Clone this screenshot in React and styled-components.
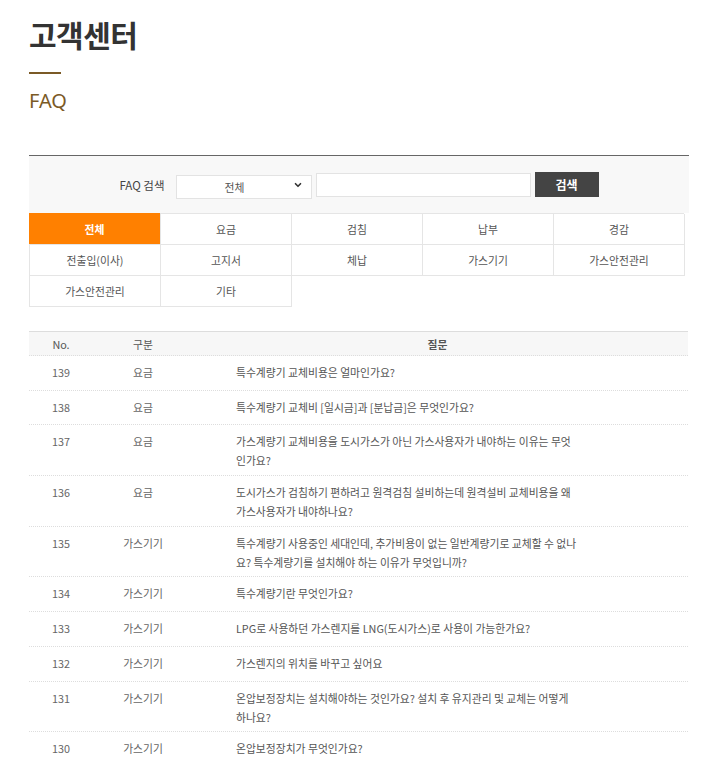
import React from "react";
import styled, { createGlobalStyle } from "styled-components";
import { ChevronDown } from "lucide-react";

const tabs = [
    "전체", "요금", "검침", "납부", "경감",
    "전출입(이사)", "고지서", "체납", "가스기기", "가스안전관리",
    "가스안전관리", "기타",
];

const faqs = [
    { no: 139, type: "요금", q: "특수계량기 교체비용은 얼마인가요?" },
    { no: 138, type: "요금", q: "특수계량기 교체비 [일시금]과 [분납금]은 무엇인가요?" },
    { no: 137, type: "요금", q: "가스계량기 교체비용을 도시가스가 아닌 가스사용자가 내야하는 이유는 무엇인가요?" },
    { no: 136, type: "요금", q: "도시가스가 검침하기 편하려고 원격검침 설비하는데 원격설비 교체비용을 왜 가스사용자가 내야하나요?" },
    { no: 135, type: "가스기기", q: "특수계량기 사용중인 세대인데, 추가비용이 없는 일반계량기로 교체할 수 없나요? 특수계량기를 설치해야 하는 이유가 무엇입니까?" },
    { no: 134, type: "가스기기", q: "특수계량기란 무엇인가요?" },
    { no: 133, type: "가스기기", q: "LPG로 사용하던 가스렌지를 LNG(도시가스)로 사용이 가능한가요?" },
    { no: 132, type: "가스기기", q: "가스렌지의 위치를 바꾸고 싶어요" },
    { no: 131, type: "가스기기", q: "온압보정장치는 설치해야하는 것인가요? 설치 후 유지관리 및 교체는 어떻게 하나요?" },
    { no: 130, type: "가스기기", q: "온압보정장치가 무엇인가요?" },
];

const GlobalStyle = createGlobalStyle`
    body{
        margin:0;
        background:#fff;
        font-family:"Noto Sans CJK KR", "Noto Sans", sans-serif;
        color:#666;
    }
`;

const App = () => {
    return (
        <>
            <GlobalStyle />
            <Page>
                <Title>고객센터</Title>
                <Divider />
                <SubTitle>FAQ</SubTitle>
                <SearchBar onSubmit={(e) => e.preventDefault()}>
                    <label>FAQ 검색</label>
                    <SelectWrap>
                        <select defaultValue="all">
                            <option value="all">전체</option>
                        </select>
                        <ChevronDown size={10} strokeWidth={4} color="#333" />
                    </SelectWrap>
                    <SearchInput type="text" />
                    <SearchButton type="submit">검색</SearchButton>
                </SearchBar>
                <TabGrid>
                    {tabs.map((t, i) => (
                        <Tab key={i} $active={i === 0}>{t}</Tab>
                    ))}
                </TabGrid>
                <Table>
                    <HeadRow>
                        <HeadCell>No.</HeadCell>
                        <HeadCell>구분</HeadCell>
                        <HeadCell $bold>질문</HeadCell>
                    </HeadRow>
                    {faqs.map((f) => (
                        <Row key={f.no}>
                            <Cell>{f.no}</Cell>
                            <Cell>{f.type}</Cell>
                            <Question><span>{f.q}</span></Question>
                        </Row>
                    ))}
                </Table>
            </Page>
        </>
    );
};

const Page = styled.div`
    width:660px;
    padding:14px 0 40px 29px;
`;

const Title = styled.h1`
    margin:0;
    font-size:30px;
    line-height:40px;
    font-weight:700;
    color:#333;
    letter-spacing:-0.5px;
`;

const Divider = styled.div`
    width:32px;
    height:2px;
    background:#7b5a26;
    margin-top:18px;
`;

const SubTitle = styled.h2`
    margin:14px 0 0;
    font-family:"Noto Sans", "Noto Sans CJK KR", sans-serif;
    font-size:20px;
    line-height:26px;
    font-weight:400;
    color:#7b5a26;
`;

const SearchBar = styled.form`
    margin-top:41px;
    border-top:1px solid #666;
    background:#f8f8f8;
    height:57px;
    display:flex;
    align-items:center;
    justify-content:center;
    gap:4px;
    label{
        font-size:11.5px;
        color:#444;
        margin-right:7px;
    }
`;

const SelectWrap = styled.div`
    position:relative;
    width:136px;
    height:24px;
    select{
        width:100%;
        height:100%;
        appearance:none;
        border:1px solid #e3e3e3;
        background:#fff;
        font-family:inherit;
        font-size:10.8px;
        color:#555;
        text-align:center;
        text-align-last:center;
        padding:0 18px 0 0;
        outline:none;
    }
    svg{
        position:absolute;
        right:9px;
        top:7px;
        pointer-events:none;
    }
`;

const SearchInput = styled.input`
    width:215px;
    height:24px;
    box-sizing:border-box;
    border:1px solid #e3e3e3;
    background:#fff;
    outline:none;
`;

const SearchButton = styled.button`
    width:64px;
    height:25px;
    border:none;
    background:#444;
    color:#fff;
    font-family:inherit;
    font-size:12px;
    font-weight:700;
    cursor:pointer;
`;

const TabGrid = styled.div`
    display:grid;
    grid-template-columns:repeat(5, 131px);
    border-top:1px solid #e5e5e5;
    border-left:1px solid #e5e5e5;
    width:655px;
    box-sizing:border-box;
`;

const Tab = styled.div`
    display:flex;
    align-items:center;
    justify-content:center;
    border-right:1px solid #e5e5e5;
    border-bottom:1px solid #e5e5e5;
    font-size:10.8px;
    background:${(p) => (p.$active ? "#ff8000" : "#fff")};
    color:${(p) => (p.$active ? "#fff" : "#555")};
    font-weight:${(p) => (p.$active ? 700 : 400)};
    margin:${(p) => (p.$active ? "-1px 0 0 -1px" : "0")};
    height:${(p) => (p.$active ? "31px" : "30px")};
    cursor:pointer;
`;

const Table = styled.div`
    margin-top:24px;
    border-top:1px solid #ddd;
    width:659px;
`;

const HeadRow = styled.div`
    display:grid;
    grid-template-columns:64px 100px 1fr;
    height:24px;
    box-sizing:border-box;
    align-items:center;
    background:#f7f7f7;
    border-bottom:1px dotted #ddd;
    color:#555;
    font-size:10.8px;
    text-align:center;
`;

const HeadCell = styled.div`
    font-weight:${(p) => (p.$bold ? 700 : 400)};
    padding-right:${(p) => (p.$bold ? "6px" : "0")};
`;

const Row = styled.div`
    display:grid;
    grid-template-columns:64px 100px 1fr;
    min-height:34.7px;
    border-bottom:1px dotted #ddd;
    font-size:10.8px;
    line-height:19px;
    color:#666;
    box-sizing:border-box;
`;

const Cell = styled.div`
    text-align:center;
    padding:7px 0 4.7px;
`;

const Question = styled.div`
    padding:7px 0 4.7px 43px;
    span{
        display:block;
        max-width:342px;
        color:#555;
    }
`;

export default App;
